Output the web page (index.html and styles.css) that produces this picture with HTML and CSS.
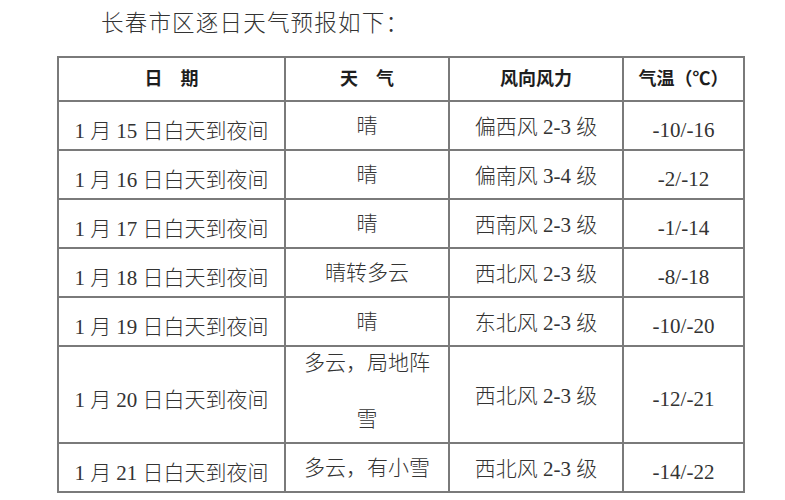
FILE: index.html
```html
<!DOCTYPE html>
<html lang="zh-CN">
<head>
<meta charset="utf-8">
<title>长春市区逐日天气预报</title>
<link rel="stylesheet" href="styles.css">
</head>
<body>
<div class="page">
  <div class="title">长春市区逐日天气预报如下：</div>
  <table class="forecast">
    <colgroup>
      <col class="c-date"><col class="c-wx"><col class="c-wind"><col class="c-temp">
    </colgroup>
    <thead>
      <tr class="head">
        <th>日　期</th><th>天　气</th><th>风向风力</th><th>气温（℃）</th>
      </tr>
    </thead>
    <tbody>
      <tr class="row"><td class="date">1 月 15 日白天到夜间</td><td class="wx">晴</td><td class="wind">偏西风 2-3 级</td><td class="temp">-10/-16</td></tr>
      <tr class="row"><td class="date">1 月 16 日白天到夜间</td><td class="wx">晴</td><td class="wind">偏南风 3-4 级</td><td class="temp">-2/-12</td></tr>
      <tr class="row"><td class="date">1 月 17 日白天到夜间</td><td class="wx">晴</td><td class="wind">西南风 2-3 级</td><td class="temp">-1/-14</td></tr>
      <tr class="row"><td class="date">1 月 18 日白天到夜间</td><td class="wx">晴转多云</td><td class="wind">西北风 2-3 级</td><td class="temp">-8/-18</td></tr>
      <tr class="row"><td class="date">1 月 19 日白天到夜间</td><td class="wx">晴</td><td class="wind">东北风 2-3 级</td><td class="temp">-10/-20</td></tr>
      <tr class="row tall"><td class="date">1 月 20 日白天到夜间</td><td class="wx"><div class="wrap">多云，局地阵雪</div></td><td class="wind">西北风 2-3 级</td><td class="temp">-12/-21</td></tr>
      <tr class="row"><td class="date">1 月 21 日白天到夜间</td><td class="wx">多云，有小雪</td><td class="wind">西北风 2-3 级</td><td class="temp">-14/-22</td></tr>
    </tbody>
  </table>
</div>
</body>
</html>
```
FILE: styles.css
```css
html, body {
  margin: 0;
  padding: 0;
  background: #ffffff;
}
.page {
  padding-left: 57px;
  font-family: "Liberation Serif", "Noto Sans CJK SC", serif;
  color: #2a2a2a;
}
.title {
  height: 56px;
  line-height: 47px;
  padding-left: 44px;
  font-size: 22.5px;
  letter-spacing: 1.2px;
  font-weight: 300;
  color: #333;
}
.forecast {
  border-collapse: collapse;
  table-layout: fixed;
  width: 686px;
  border: 2px solid #7a7a7a;
}
.c-date { width: 227px; }
.c-wx { width: 164px; }
.c-wind { width: 174px; }
.c-temp { width: 121px; }
.forecast th, .forecast td {
  border: 2px solid #7a7a7a;
  text-align: center;
  vertical-align: middle;
  padding: 0;
  overflow: visible;
}
.head {
  height: 44px;
}
.head th {
  font-size: 18px;
  font-weight: 700;
  color: #1e1e1e;
  line-height: 24px;
}
.row {
  height: 49px;
}
.row.tall {
  height: 97px;
}
.row td {
  font-size: 21px;
  font-weight: 300;
  line-height: 28px;
  color: #333;
}
.row td.date {
  padding-top: 10px;
}
.row td.wx {
  padding: 0 16px;
}
.wrap {
  line-height: 56px;
  height: 90px;
  margin-top: -30px;
}
.row td.wind {
  padding-top: 3px;
}
.row td.temp {
  padding-top: 8px;
}
```
